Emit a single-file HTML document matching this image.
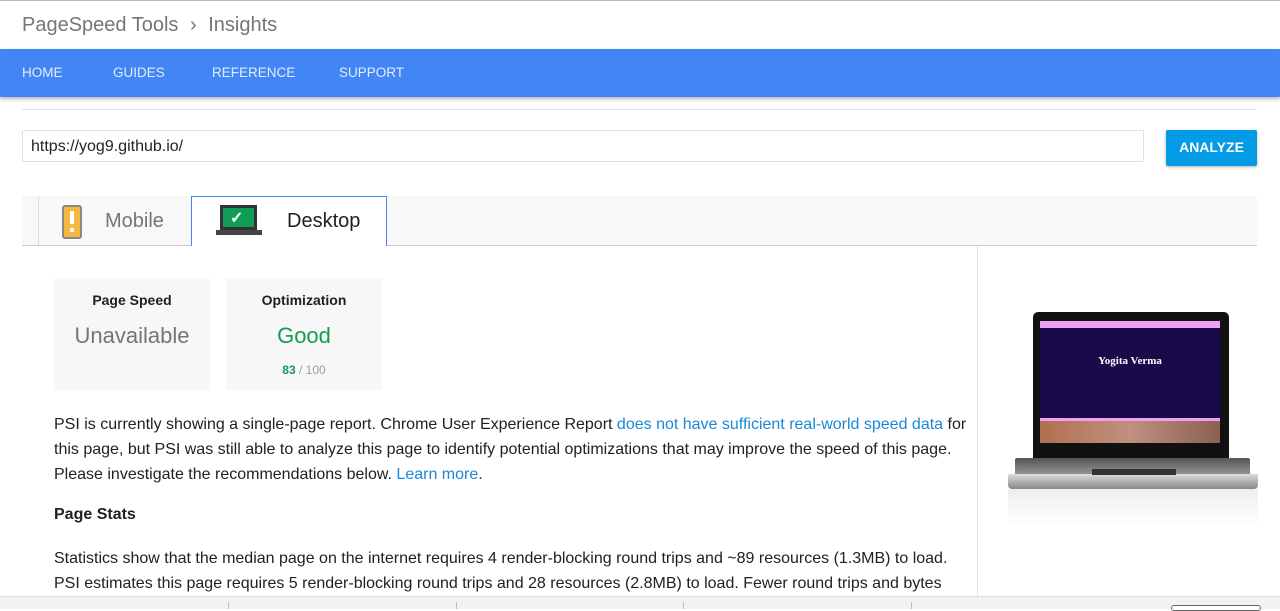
<!DOCTYPE html>
<html><head><meta charset="utf-8"><style>
*{box-sizing:border-box;margin:0;padding:0}
body{width:1280px;height:609px;overflow:hidden;background:#fff;font-family:"Liberation Sans",sans-serif;position:relative;color:#212121}
.abs{position:absolute}
.nav{font-size:13.5px;color:#e3ecfd;top:65px}
</style></head><body>
<div class="abs" style="left:0;top:0;width:1280px;height:1px;background:#bbb"></div>
<div class="abs" style="left:22px;top:14px;font-size:20px;color:#757575">PageSpeed Tools <span style="margin:0 6px">›</span> Insights</div>
<div class="abs" style="left:0;top:49px;width:1280px;height:48px;background:#4285f4;box-shadow:0 2px 4px rgba(0,0,0,.3)"></div>
<div class="abs nav" style="left:22px">HOME</div>
<div class="abs nav" style="left:113px">GUIDES</div>
<div class="abs nav" style="left:212px">REFERENCE</div>
<div class="abs nav" style="left:339px">SUPPORT</div>
<div class="abs" style="left:22px;top:109px;width:1235px;height:1px;background:#e0e0e0"></div>
<div class="abs" style="left:22px;top:130px;width:1122px;height:32px;border:1px solid #e0e0e0;border-radius:2px;font-size:16px;padding:7px 8px;color:#222">https://yog9.github.io/</div>
<div class="abs" style="left:1166px;top:130px;width:91px;height:36px;background:#039be5;border-radius:2px;box-shadow:0 1px 3px rgba(0,0,0,.3);color:#fff;font-size:14px;font-weight:bold;text-align:center;line-height:35px">ANALYZE</div>
<div class="abs" style="left:22px;top:196px;width:1235px;height:50px;background:#f8f8f8;border-bottom:1px solid #ccc"></div>
<div class="abs" style="left:38px;top:196px;width:1px;height:49px;background:#ddd"></div>
<div class="abs" style="left:62px;top:205px;width:20px;height:34px;background:#f5b942;border:2px solid #888;border-radius:3px"></div>
<div class="abs" style="left:70px;top:211px;width:4px;height:13px;background:#fff"></div>
<div class="abs" style="left:70px;top:228px;width:4px;height:4px;background:#fff"></div>
<div class="abs" style="left:105px;top:210px;font-size:20px;color:#757575">Mobile</div>
<div class="abs" style="left:191px;top:196px;width:196px;height:50px;background:#fff;border:1px solid #4285f4;border-bottom:none"></div>
<div class="abs" style="left:220px;top:205px;width:37px;height:25px;background:#0f9d58;border:3px solid #333"></div>
<div class="abs" style="left:230px;top:208px;color:#fff;font-size:16px;font-weight:bold">✓</div>
<div class="abs" style="left:216px;top:230px;width:46px;height:5px;background:#444"></div>
<div class="abs" style="left:287px;top:210px;font-size:20px;color:#212121">Desktop</div>
<div class="abs" style="left:977px;top:246px;width:1px;height:350px;background:#e0e0e0"></div>
<div class="abs" style="left:54px;top:278px;width:156px;height:112px;background:#f7f7f7;text-align:center">
<div style="margin-top:14px;font-size:14px;font-weight:bold">Page Speed</div>
<div style="margin-top:15px;font-size:22px;color:#757575">Unavailable</div></div>
<div class="abs" style="left:226px;top:278px;width:156px;height:112px;background:#f7f7f7;text-align:center">
<div style="margin-top:14px;font-size:14px;font-weight:bold">Optimization</div>
<div style="margin-top:15px;font-size:22px;color:#0f9d58">Good</div>
<div style="margin-top:14px;font-size:12px;color:#9e9e9e"><b style="color:#0f9d58">83</b> / 100</div></div>
<div class="abs" style="left:54px;top:412px;width:922px;font-size:16px;line-height:25px;color:#212121">PSI is currently showing a single-page report. Chrome User Experience Report <span style="color:#1a88d8">does not have sufficient real-world speed data</span> for this page, but PSI was still able to analyze this page to identify potential optimizations that may improve the speed of this page. Please investigate the recommendations below. <span style="color:#1a88d8">Learn more</span>.</div>
<div class="abs" style="left:54px;top:506px;font-size:16px;font-weight:bold">Page Stats</div>
<div class="abs" style="left:54px;top:546px;width:905px;font-size:16px;line-height:25px">Statistics show that the median page on the internet requires 4 render-blocking round trips and ~89 resources (1.3MB) to load. PSI estimates this page requires 5 render-blocking round trips and 28 resources (2.8MB) to load. Fewer round trips and bytes</div>
<!-- laptop -->
<div class="abs" style="left:1033px;top:312px;width:196px;height:155px;background:#111;border-radius:5px 5px 0 0"></div>
<div class="abs" style="left:1040px;top:321px;width:180px;height:7px;background:#f0a0f0"></div>
<div class="abs" style="left:1040px;top:328px;width:180px;height:90px;background:#1b0a4a"></div>
<div class="abs" style="left:1040px;top:355px;width:180px;text-align:center;color:#fff;font-family:'Liberation Serif',serif;font-weight:bold;font-size:11px">Yogita Verma</div>
<div class="abs" style="left:1040px;top:418px;width:180px;height:3px;background:#f0a0f0"></div>
<div class="abs" style="left:1040px;top:421px;width:180px;height:22px;background:linear-gradient(90deg,#b07050,#c09080,#8a6050)"></div>
<div class="abs" style="left:1015px;top:458px;width:235px;height:18px;background:linear-gradient(#555,#9a9a9a);border-radius:2px"></div>
<div class="abs" style="left:1008px;top:474px;width:250px;height:15px;background:linear-gradient(#ddd,#888);border-radius:0 0 4px 4px"></div>
<div class="abs" style="left:1092px;top:469px;width:84px;height:6px;background:#333"></div>
<div class="abs" style="left:1008px;top:489px;width:250px;height:38px;background:linear-gradient(#eee,#fff)"></div>
<!-- bottom bar -->
<div class="abs" style="left:0;top:596px;width:1280px;height:13px;background:#f2f2f2;border-top:1px solid #ddd"></div>
<div class="abs" style="left:228px;top:602px;width:1px;height:7px;background:#bbb"></div>
<div class="abs" style="left:456px;top:602px;width:1px;height:7px;background:#bbb"></div>
<div class="abs" style="left:683px;top:602px;width:1px;height:7px;background:#bbb"></div>
<div class="abs" style="left:911px;top:602px;width:1px;height:7px;background:#bbb"></div>
<div class="abs" style="left:1171px;top:605px;width:90px;height:6px;background:#fff;border:1px solid #666;border-radius:3px"></div>
</body></html>
